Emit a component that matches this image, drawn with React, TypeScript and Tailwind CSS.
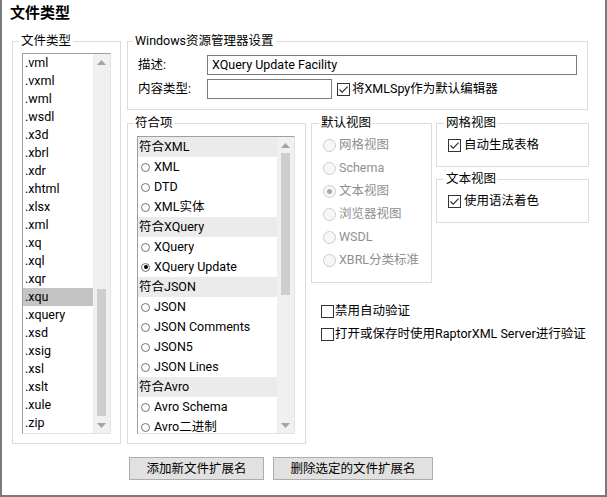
import React from 'react';

const extensions = [
  '.vml', '.vxml', '.wml', '.wsdl', '.x3d', '.xbrl', '.xdr', '.xhtml', '.xlsx', '.xml', '.xq',
  '.xql', '.xqr', '.xqu', '.xquery', '.xsd', '.xsig', '.xsl', '.xslt', '.xule', '.zip',
];

const conforms = [
  { header: '符合XML', items: ['XML', 'DTD', 'XML实体'] },
  { header: '符合XQuery', items: ['XQuery', 'XQuery Update'] },
  { header: '符合JSON', items: ['JSON', 'JSON Comments', 'JSON5', 'JSON Lines'] },
  { header: '符合Avro', items: ['Avro Schema', 'Avro二进制'] },
];

const views = ['网格视图', 'Schema', '文本视图', '浏览器视图', 'WSDL', 'XBRL分类标准'];

const Arrow = ({ down }: { down?: boolean }) => (
  <div className="h-[16px] flex items-center justify-center">
    <svg width="9" height="5" viewBox="0 0 9 5">
      {down ? <polygon points="0,0 9,0 4.5,5" fill="#a3a3a3" /> : <polygon points="0,5 9,5 4.5,0" fill="#a3a3a3" />}
    </svg>
  </div>
);

// thumb offsets are fixed per list, so the classes are written out by the caller
const ScrollBar = ({ before, thumb }: { before: string; thumb: string }) => (
  <div className="w-[17px] shrink-0 bg-[#f0f0f0] flex flex-col">
    <Arrow />
    <div className={before} />
    <div className={`mx-auto w-[9px] bg-[#cdcdcd] ${thumb}`} />
    <div className="flex-1" />
    <Arrow down />
  </div>
);

const CheckBox = ({ checked }: { checked?: boolean }) => (
  <div className="w-[13px] h-[13px] border border-[#333333] bg-white flex items-center justify-center shrink-0">
    {checked && (
      <svg width="11" height="11" viewBox="0 0 11 11">
        <path d="M1.5 5.5 L4.2 8.2 L9.6 2.6" fill="none" stroke="#333333" strokeWidth="1.2" />
      </svg>
    )}
  </div>
);

const Legend = ({ children, className }: { children: React.ReactNode; className: string }) => (
  <legend className={`px-[2px] leading-[16px] whitespace-nowrap ${className}`}>{children}</legend>
);

export default function App() {
  return (
    <div className="w-[607px] h-[497px] bg-white border-l-2 border-r-2 border-b-2 border-[#7a7a7a] text-[12.5px] text-black font-['Roboto','Noto_Sans_CJK_SC',sans-serif] overflow-hidden">
      <div className="pl-[8px] pt-[3px] h-[33px] text-[15px] font-bold leading-[20px]">文件类型</div>

      <div className="flex pl-[10px] gap-[6px]">
        {/* file type list */}
        <fieldset className="w-[109px] h-[411px] shrink-0 border border-[#dcdcdc] pl-[9px] pt-[4px]">
          <Legend className="ml-[-3px]">文件类型</Legend>
          <div className="w-[89px] h-[381px] border-t border-l border-[#a0a0a0] border-r-[#e3e3e3] border-b-[#e3e3e3] border-r border-b flex">
            <div className="flex-1 bg-white">
              {extensions.map((e) => (
                <div key={e} className={`h-[18px] leading-[18px] pl-[2px] ${e === '.xqu' ? 'bg-[#c4c4c4]' : ''}`}>
                  {e}
                </div>
              ))}
            </div>
            <ScrollBar before="h-[219px]" thumb="h-[127px]" />
          </div>
        </fieldset>

        <div className="w-[461px] shrink-0 flex flex-col">
          <fieldset className="h-[77px] border border-[#dcdcdc] pl-[10px] pt-[6px]">
            <Legend className="ml-[-5px]">Windows资源管理器设置</Legend>
            <div className="flex items-center h-[20px]">
              <div className="w-[69px]">描述:</div>
              <div className="w-[370px] h-[20px] border border-[#7a7a7a] pl-[4px] leading-[18px]">XQuery Update Facility</div>
            </div>
            <div className="flex items-center h-[20px] mt-[4px]">
              <div className="w-[69px]">内容类型:</div>
              <div className="w-[125px] h-[20px] border border-[#7a7a7a]" />
              <div className="ml-[5px]">
                <CheckBox checked />
              </div>
              <span className="ml-[2px]">将XMLSpy作为默认编辑器</span>
            </div>
          </fieldset>

          <div className="flex mt-[5px]">
            <fieldset className="w-[179px] h-[329px] shrink-0 border border-[#dcdcdc] pl-[9px] pt-[5px]">
              <Legend className="ml-[-4px]">符合项</Legend>
              <div className="w-[158px] h-[298px] border-t border-l border-[#a0a0a0] border-r-[#e3e3e3] border-b-[#e3e3e3] border-r border-b flex">
                <div className="flex-1 bg-white">
                  {conforms.map((g) => (
                    <div key={g.header}>
                      <div className="h-[20px] leading-[20px] bg-[#ebebeb] pl-[1px]">{g.header}</div>
                      {g.items.map((it) => (
                        <div key={it} className="h-[20px] flex items-center pl-[3px]">
                          <div className="w-[9px] h-[9px] rounded-full border border-[#707070] flex items-center justify-center">
                            {it === 'XQuery Update' && <div className="w-[4px] h-[4px] rounded-full bg-black" />}
                          </div>
                          <span className="ml-[4px] leading-[20px]">{it}</span>
                        </div>
                      ))}
                    </div>
                  ))}
                </div>
                <ScrollBar before="h-0" thumb="h-[142px]" />
              </div>
            </fieldset>

            <div className="w-[278px] shrink-0 ml-[5px] flex flex-col">
              <div className="flex">
                <fieldset className="w-[121px] h-[168px] shrink-0 border border-[#dcdcdc] pl-[11px] pt-[3px]">
                  <Legend className="ml-[-4px]">默认视图</Legend>
                  {views.map((v) => (
                    <div key={v} className="h-[23px] flex items-center">
                      <div className="w-[13px] h-[13px] rounded-full border border-[#cccccc] bg-[#f7f7f7] flex items-center justify-center">
                        {v === '文本视图' && <div className="w-[5px] h-[5px] rounded-full bg-[#a8a8a8]" />}
                      </div>
                      <span className="ml-[3px] text-[#8f8f8f]">{v}</span>
                    </div>
                  ))}
                </fieldset>

                <div className="ml-[4px] flex flex-col">
                  <fieldset className="w-[153px] h-[52px] border border-[#dcdcdc] pl-[11px] pt-[6px]">
                    <Legend className="ml-[-4px]">网格视图</Legend>
                    <div className="h-[16px] flex items-center">
                      <CheckBox checked />
                      <span className="ml-[3px]">自动生成表格</span>
                    </div>
                  </fieldset>
                  <fieldset className="w-[153px] h-[52px] mt-[4px] border border-[#dcdcdc] pl-[11px] pt-[6px]">
                    <Legend className="ml-[-4px]">文本视图</Legend>
                    <div className="h-[16px] flex items-center">
                      <CheckBox checked />
                      <span className="ml-[3px]">使用语法着色</span>
                    </div>
                  </fieldset>
                </div>
              </div>

              <div className="pl-[10px] mt-[20px] flex flex-col gap-[7px]">
                <div className="h-[16px] flex items-center">
                  <CheckBox />
                  <span className="ml-[1px]">禁用自动验证</span>
                </div>
                <div className="h-[16px] flex items-center">
                  <CheckBox />
                  <span className="ml-[1px] whitespace-nowrap">打开或保存时使用RaptorXML Server进行验证</span>
                </div>
              </div>
            </div>
          </div>
        </div>
      </div>

      <div className="flex gap-[9px] pl-[127px] mt-[13px]">
        <button className="w-[135px] h-[23px] bg-[#e1e1e1] border border-[#adadad] leading-[21px]">添加新文件扩展名</button>
        <button className="w-[160px] h-[23px] bg-[#e1e1e1] border border-[#adadad] leading-[21px]">删除选定的文件扩展名</button>
      </div>
    </div>
  );
}
